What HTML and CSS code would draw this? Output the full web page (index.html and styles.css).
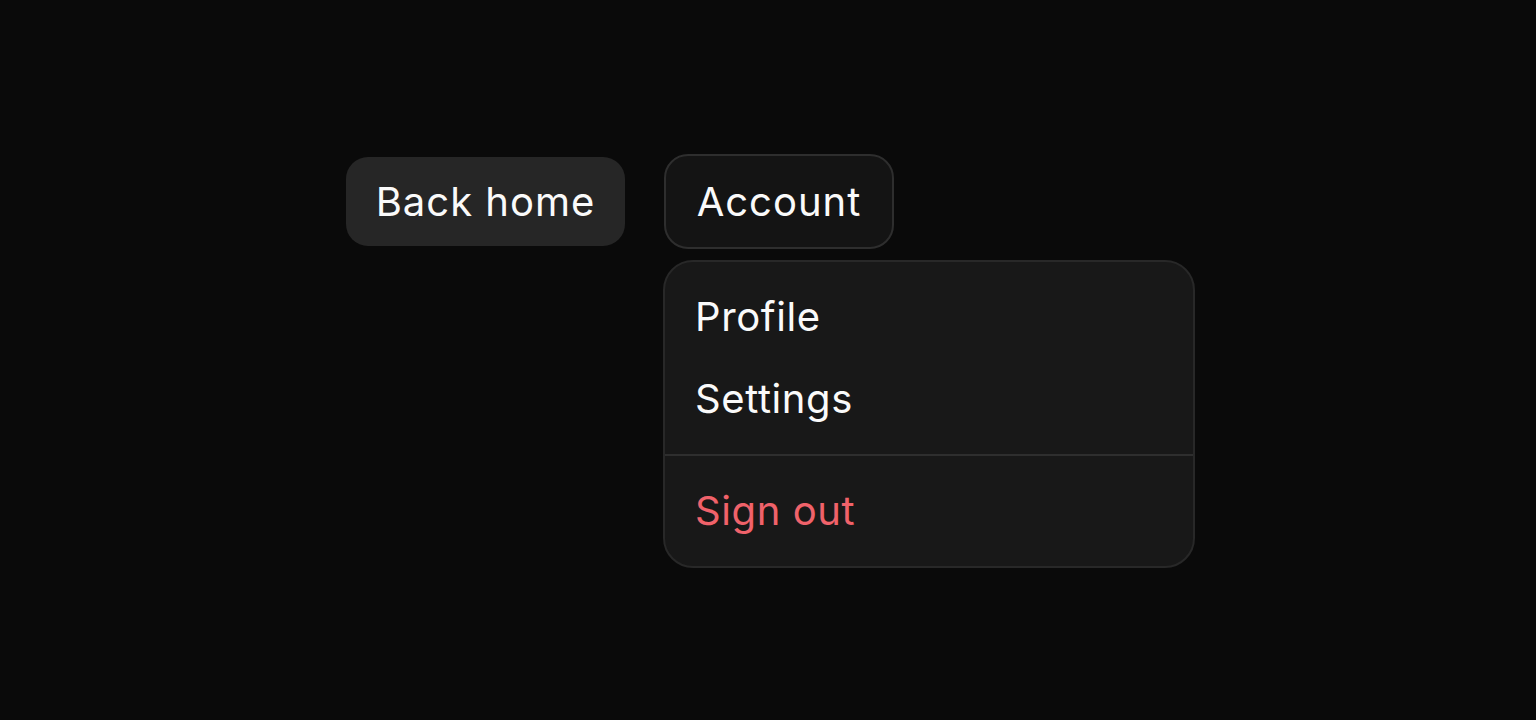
FILE: index.html
```html
<!DOCTYPE html>
<html lang="en">
<head>
<meta charset="utf-8">
<title>Menu</title>
<link rel="stylesheet" href="styles.css">
</head>
<body>
<div class="stage">
  <button class="btn btn-solid">Back home</button>
  <div class="account">
    <button class="btn btn-outline">Account</button>
    <div class="menu">
      <div class="item">Profile</div>
      <div class="item">Settings</div>
      <div class="sep"></div>
      <div class="item danger">Sign out</div>
    </div>
  </div>
</div>
</body>
</html>
```
FILE: styles.css
```css
* { box-sizing: border-box; }
html, body {
  margin: 0;
  height: 100%;
  background: #0a0a0a;
  font-family: Inter, "Noto Sans", sans-serif;
  color: #fafafa;
}
.stage {
  display: flex;
  align-items: flex-start;
  gap: 39px;
  padding: 154px 0 0 346px;
}
.btn {
  font-family: inherit;
  font-size: 40px;
  font-weight: 400;
  letter-spacing: 1px;
  line-height: 48px;
  color: #fafafa;
  cursor: pointer;
}
.btn-solid {
  margin-top: 3px;
  height: 89px;
  width: 279px;
  background: #262626;
  border: none;
  padding: 0;
  border-radius: 22px;
}
.btn-outline {
  height: 95px;
  width: 230px;
  background: #141414;
  border: 2px solid #2e2e2e;
  padding: 0;
  border-radius: 24px;
}
.account {
  position: relative;
}
.menu {
  position: absolute;
  top: 106px;
  left: -1px;
  width: 532px;
  background: #181818;
  border: 2px solid #282828;
  border-radius: 30px;
  padding: 14px 0;
}
.item {
  font-size: 40px;
  line-height: 40px;
  letter-spacing: 0.6px;
  padding: 21px 30px;
  color: #fafafa;
}
.item.danger { color: #f0626a; }
.sep {
  height: 2px;
  background: #2e2e2e;
  margin: 14px 0;
}
```
